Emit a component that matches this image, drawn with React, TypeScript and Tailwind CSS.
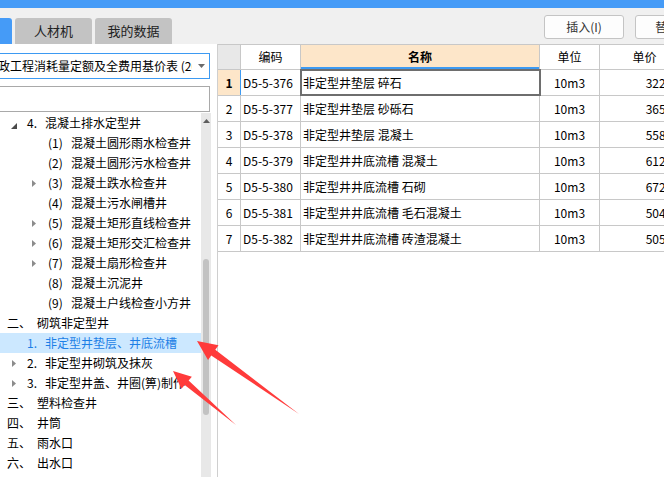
import React from "react";

type Level = "A" | "B" | "C";
type Node = { lvl: Level; icon?: "open" | "closed"; pre: string; text: string; sel?: boolean };

const tree: Node[] = [
  { lvl: "B", icon: "open", pre: "4.", text: "混凝土排水定型井" },
  { lvl: "C", pre: "(1)", text: "混凝土圆形雨水检查井" },
  { lvl: "C", pre: "(2)", text: "混凝土圆形污水检查井" },
  { lvl: "C", icon: "closed", pre: "(3)", text: "混凝土跌水检查井" },
  { lvl: "C", pre: "(4)", text: "混凝土污水闸槽井" },
  { lvl: "C", icon: "closed", pre: "(5)", text: "混凝土矩形直线检查井" },
  { lvl: "C", icon: "closed", pre: "(6)", text: "混凝土矩形交汇检查井" },
  { lvl: "C", icon: "closed", pre: "(7)", text: "混凝土扇形检查井" },
  { lvl: "C", pre: "(8)", text: "混凝土沉泥井" },
  { lvl: "C", pre: "(9)", text: "混凝土户线检查小方井" },
  { lvl: "A", pre: "二、", text: "砌筑非定型井" },
  { lvl: "B", pre: "1.", text: "非定型井垫层、井底流槽", sel: true },
  { lvl: "B", icon: "closed", pre: "2.", text: "非定型井砌筑及抹灰" },
  { lvl: "B", icon: "closed", pre: "3.", text: "非定型井盖、井圈(箅)制作" },
  { lvl: "A", pre: "三、", text: "塑料检查井" },
  { lvl: "A", pre: "四、", text: "井筒" },
  { lvl: "A", pre: "五、", text: "雨水口" },
  { lvl: "A", pre: "六、", text: "出水口" },
];

const rowPad: Record<Level, string> = { A: "pl-[7px]", B: "pl-[11px]", C: "pl-[31px]" };
const slotW: Record<Level, string> = { A: "w-0", B: "w-[16px]", C: "w-[17px]" };
const preW: Record<Level, string> = { A: "w-[30px]", B: "w-[18px]", C: "w-[23px]" };

const rows = [
  ["D5-5-376", "非定型井垫层 碎石", "10m3", "3224.69"],
  ["D5-5-377", "非定型井垫层 砂砾石", "10m3", "3651.08"],
  ["D5-5-378", "非定型井垫层 混凝土", "10m3", "5583.72"],
  ["D5-5-379", "非定型井井底流槽 混凝土", "10m3", "6129.40"],
  ["D5-5-380", "非定型井井底流槽 石砌", "10m3", "6726.15"],
  ["D5-5-381", "非定型井井底流槽 毛石混凝土", "10m3", "5043.88"],
  ["D5-5-382", "非定型井井底流槽 砖渣混凝土", "10m3", "5059.31"],
];

function arrowPoints(tip: [number, number], tail: [number, number], hl: number, hw: number, sw: number) {
  const dx = tail[0] - tip[0];
  const dy = tail[1] - tip[1];
  const len = Math.hypot(dx, dy);
  const ux = dx / len, uy = dy / len;
  const nx = -uy, ny = ux;
  const bx = tip[0] + ux * hl, by = tip[1] + uy * hl;
  const pts = [
    [tip[0], tip[1]],
    [bx + nx * hw, by + ny * hw],
    [bx + nx * sw, by + ny * sw],
    [tail[0], tail[1]],
    [bx - nx * sw, by - ny * sw],
    [bx - nx * hw, by - ny * hw],
  ];
  return pts.map((p) => p.join(",")).join(" ");
}

function TreeIcon({ kind }: { kind?: "open" | "closed" }) {
  if (kind === "open")
    return (
      <svg width="6" height="6" className="mt-[5px]">
        <polygon points="6,0 6,6 0,6" fill="#4a4a4a" />
      </svg>
    );
  if (kind === "closed")
    return (
      <svg width="4" height="7" className="ml-[1px] mt-[1px]">
        <polygon points="0,0 4,3.5 0,7" fill="#8c8c8c" />
      </svg>
    );
  return null;
}

export default function App() {
  return (
    <div
      className="relative w-[664px] h-[477px] overflow-hidden bg-white text-[12px] text-black"
      style={{ fontFamily: '"Noto Sans CJK SC", "Noto Sans", sans-serif' }}
    >
      <div className="h-2 bg-[#459bf7]" />
      <div className="flex h-[36px] bg-[#f0f0f0]">
        <div className="w-[218px] flex items-end gap-[3px]">
          <div className="w-[12px] h-[26px] bg-[#459bf7] rounded-tr-[3px]" />
          <div className="w-[77px] h-[26px] bg-[#c3c3c3] rounded-t-[3px] flex items-center justify-center text-[13px] text-[#222]">
            人材机
          </div>
          <div className="w-[77px] h-[26px] bg-[#c3c3c3] rounded-t-[3px] flex items-center justify-center text-[13px] text-[#222]">
            我的数据
          </div>
        </div>
        <div className="flex-1 flex justify-end gap-[11px] pt-[7px] -mr-[51px]">
          <div className="w-[80px] h-[24px] bg-[#fdfdfd] border border-[#c4c4c4] rounded-[3px] flex items-center justify-center text-[#333]">
            插入(I)
          </div>
          <div className="w-[80px] h-[24px] bg-[#fdfdfd] border border-[#c4c4c4] rounded-[3px] flex items-center justify-center text-[#333]">
            替换(R)
          </div>
        </div>
      </div>

      <div className="flex h-[433px]">
        <div className="w-[218px] border-r border-[#cfcfcf] flex flex-col">
          <div className="pt-[9px] pr-[7px]">
            <div className="h-[26px] border border-l-0 border-[#3d9af2] flex items-center overflow-hidden">
              <div className="flex-1 overflow-hidden whitespace-nowrap">
                <span className="inline-block -ml-[14px]">市政工程消耗量定额及全费用基价表 (2016)</span>
              </div>
              <svg width="7" height="4" className="ml-[6px] mr-[4px] shrink-0">
                <polygon points="0,0 7,0 3.5,4" fill="#6b6b6b" />
              </svg>
            </div>
            <div className="mt-[7px] h-[26px] border border-l-0 border-[#a9a9a9]" />
          </div>
          <div className="flex flex-1 mt-[1px] min-h-0">
            <div className="flex-1 pt-0">
              {tree.map((n, i) => (
                <div
                  key={i}
                  className={`h-5 flex items-center whitespace-nowrap ${rowPad[n.lvl]} ${
                    n.sel ? "bg-[#cce8ff] text-[#1c7fe6]" : ""
                  }`}
                >
                  <div className={`${slotW[n.lvl]} h-5 flex items-center shrink-0`}>
                    <TreeIcon kind={n.icon} />
                  </div>
                  <span className={`${preW[n.lvl]} shrink-0`}>{n.pre}</span>
                  <span>{n.text}</span>
                </div>
              ))}
            </div>
            <div className="w-[10px] bg-[#e8e8e8] flex flex-col items-center mr-[6px]">
              <svg width="7" height="4" className="mt-[6px]">
                <polygon points="0,4 7,4 3.5,0" fill="#5e5e5e" />
              </svg>
              <div className="mt-[136px] w-[6px] h-[156px] rounded-[3px] bg-[#c2c2c2]" />
            </div>
          </div>
        </div>

        <div className="flex-1 overflow-hidden">
          <div className="w-[500px] border-t border-[#c8c8c8]">
            <div className="flex h-[25px] border-b border-[#c8c8c8]">
              <div className="w-[23px] bg-[#e8e8e8] border-r border-[#c8c8c8]" />
              <div className="w-[60px] border-r border-[#c8c8c8] flex items-center justify-center">编码</div>
              <div className="w-[239px] border-r border-[#c8c8c8] bg-[#fde6c9] flex items-center justify-center font-bold shadow-[inset_0_-2px_0_#3d9af2]">
                名称
              </div>
              <div className="w-[60px] border-r border-[#c8c8c8] flex items-center justify-center">单位</div>
              <div className="w-[90px] border-r border-[#c8c8c8] flex items-center justify-center">单价</div>
            </div>
            {rows.map((r, i) => (
              <div key={i} className="flex h-[26px] border-b border-[#c8c8c8]">
                <div
                  className={`w-[23px] border-r flex items-center justify-center ${
                    i === 0 ? "bg-[#fde6c9] font-bold border-[#3d9af2]" : "border-[#c8c8c8]"
                  }`}
                >
                  {i + 1}
                </div>
                <div className="w-[60px] border-r border-[#c8c8c8] flex items-center pl-[2px]">{r[0]}</div>
                <div
                  className={`w-[239px] border-r border-[#c8c8c8] flex items-center pl-[2px] ${
                    i === 0 ? "outline-2 -outline-offset-1 outline-[#6e6e6e]" : ""
                  }`}
                >
                  {r[1]}
                </div>
                <div className="w-[60px] border-r border-[#c8c8c8] flex items-center justify-center">{r[2]}</div>
                <div className="w-[90px] border-r border-[#c8c8c8] flex items-center justify-end pr-0">{r[3]}</div>
              </div>
            ))}
          </div>
        </div>
      </div>

      <svg className="absolute inset-0 pointer-events-none" width="664" height="477">
        <polygon points={arrowPoints([197, 341], [299, 414], 20, 9, 3.5)} fill="#ff3b3b" />
        <polygon points={arrowPoints([173, 371], [236, 425], 18, 8, 3)} fill="#ff3b3b" />
      </svg>
    </div>
  );
}
